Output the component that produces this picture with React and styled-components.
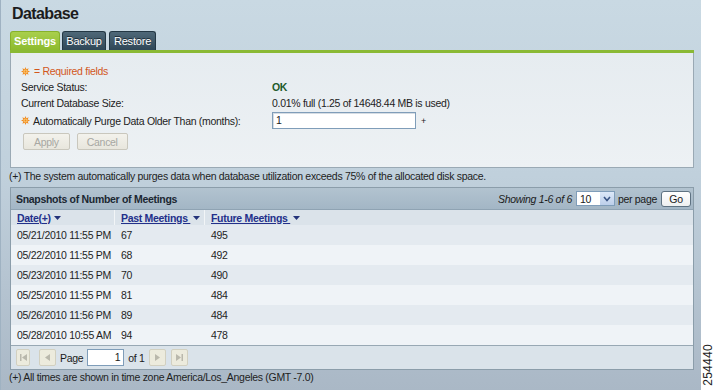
import React from "react";
import styled, { createGlobalStyle } from "styled-components";

const Global = createGlobalStyle`
  html, body { margin: 0; padding: 0; }
  body { font-family: "Liberation Sans", Arial, sans-serif; font-size: 10.5px; letter-spacing: -0.3px; color: #1a1a1a; }
  #root { width: 714px; height: 390px; overflow: hidden; }
`;

const Shell = styled.div`
  display: flex;
  width: 714px;
  height: 390px;
`;

const Main = styled.div`
  flex: 1;
  display: flex;
  flex-direction: column;
  padding: 0 7px 0 9px;
  background: linear-gradient(180deg, #c9d9e3 0%, #c0d0dc 45%, #aab8c6 100%);
  border-left: 1px solid #9fb2c2;
`;

const Strip = styled.div`
  width: 13px;
  background: #ffffff;
  display: flex;
  align-items: flex-end;
  justify-content: center;
  padding-bottom: 4px;
  box-sizing: border-box;
`;

const StripText = styled.span`
  writing-mode: vertical-rl;
  transform: rotate(180deg);
  font-size: 12px;
  color: #222;
  letter-spacing: 0.3px;
`;

const Title = styled.h1`
  margin: 0;
  padding: 4px 0 0 2px;
  height: 27px;
  font-size: 16px;
  letter-spacing: -0.6px;
  line-height: 20px;
  font-weight: bold;
  color: #1c1c1c;
`;

const Tabs = styled.div`
  display: flex;
  gap: 2px;
  height: 19px;
  align-items: flex-end;
`;

const Tab = styled.div`
  height: 19px;
  box-sizing: border-box;
  width: ${p => p.$w}px;
  justify-content: center;
  margin-right: ${p => (p.$active ? 0 : 1)}px;
  border-radius: 3px 3px 0 0;
  display: flex;
  align-items: center;
  font-size: 11px;
  letter-spacing: -0.2px;
  font-weight: ${p => (p.$active ? "bold" : "normal")};
  color: #fff;
  background: ${p =>
    p.$active
      ? "linear-gradient(180deg, #a9cf4c 0%, #8dbb2f 100%)"
      : "linear-gradient(180deg, #4f6878 0%, #2f4757 100%)"};
  border: 1px solid ${p => (p.$active ? "#86b12a" : "#233744")};
  border-bottom: none;
  text-shadow: ${p => (p.$active ? "none" : "0 -1px 0 #1a2a34")};
`;

const GreenBar = styled.div`
  height: 3px;
  background: #8ab934;
`;

const Panel = styled.div`
  background: linear-gradient(180deg, #e6ecf0 0%, #edf1f4 100%);
  border: 1px solid #9aa9b4;
  border-top: none;
  padding: 10px 10px 17px 10px;
  height: 115px;
  box-sizing: border-box;
  display: flex;
  flex-direction: column;
`;

const FormRow = styled.div`
  display: flex;
  align-items: center;
  height: ${p => p.$h || 16}px;
`;

const Label = styled.div`
  width: 251px;
  display: flex;
  align-items: center;
  gap: 3px;
  color: #222;
`;

const Required = styled.div`
  display: flex;
  align-items: center;
  gap: 4px;
  color: #d2571c;
  height: 16px;
`;

const Value = styled.div`
  color: ${p => (p.$ok ? "#1d5a2a" : "#222")};
  font-weight: ${p => (p.$ok ? "bold" : "normal")};
`;

const TextInput = styled.div`
  width: 144px;
  height: 17px;
  box-sizing: border-box;
  border: 1px solid #7f9db9;
  background: #fff;
  padding: 1px 3px;
  line-height: 13px;
  box-shadow: inset 1px 1px 0 #d6dde4;
`;

const Plus = styled.span`
  margin-left: 5px;
  font-size: 9px;
`;

const Buttons = styled.div`
  display: flex;
  gap: 7px;
  margin-top: 3px;
  padding-left: 2px;
`;

const Btn = styled.div`
  height: 17px;
  box-sizing: border-box;
  padding: 0 ${p => p.$px || 8}px;
  border: 1px solid #c9c7bd;
  border-radius: 2px;
  background: linear-gradient(180deg, #f3f2ec 0%, #e8e6dd 100%);
  color: #a7a7a2;
  display: flex;
  align-items: center;
`;

const Note = styled.div`
  height: 14px;
  line-height: 14px;
  margin: 1px 0 4px -1px;
  color: #1e1e1e;
  white-space: nowrap;
`;

const Table = styled.div`
  border: 1px solid #8b9daa;
  display: flex;
  flex-direction: column;
`;

const HeadBar = styled.div`
  height: 21px;
  display: flex;
  align-items: center;
  justify-content: space-between;
  padding: 0 2px 0 5px;
  background: linear-gradient(180deg, #b2c3d0 0%, #a3b6c5 100%);
  border-bottom: 1px solid #8fa3b3;
`;

const HeadTitle = styled.div`
  font-weight: bold;
  color: #1b2732;
`;

const HeadRight = styled.div`
  display: flex;
  align-items: center;
  gap: 3px;
`;

const Italic = styled.span`
  font-style: italic;
  margin-right: 1px;
`;

const Select = styled.div`
  width: 39px;
  height: 15px;
  box-sizing: border-box;
  border: 1px solid #7f9db9;
  background: #fff;
  display: flex;
  align-items: center;
  justify-content: space-between;
  padding-left: 3px;
`;

const SelBtn = styled.div`
  width: 14px;
  height: 13px;
  background: linear-gradient(180deg, #dce8f8 0%, #bccfea 100%);
  display: flex;
  align-items: center;
  justify-content: center;
`;

const GoBtn = styled.div`
  width: 30px;
  height: 16px;
  box-sizing: border-box;
  border: 1px solid #5e7282;
  border-radius: 3px;
  background: linear-gradient(180deg, #ffffff 0%, #eef0f1 100%);
  display: flex;
  align-items: center;
  justify-content: center;
  margin-left: 1px;
`;

const Grid = styled.div`
  display: grid;
  grid-template-columns: 104px 90px 1fr;
`;

const HCell = styled.div`
  height: 15px;
  display: flex;
  align-items: center;
  padding-left: 6px;
  background: #dbe3ea;
  border-right: ${p => (p.$last ? "none" : "1px solid #f2f5f7")};
  gap: 3px;
  white-space: pre;
`;

const SortLink = styled.span`
  color: #23308a;
  font-weight: bold;
  text-decoration: underline;
`;

const Cell = styled.div`
  height: 20px;
  display: flex;
  align-items: center;
  padding-left: 6px;
  white-space: nowrap;
  background: ${p => (p.$odd ? "#e4eaf0" : "#eff3f7")};
  color: #1e1e1e;
`;

const Footer = styled.div`
  height: 23px;
  border-top: 1px solid #98a8b4;
  background: #dae3ea;
  display: flex;
  align-items: center;
  padding-left: 5px;
  gap: 4px;
`;

const PageBtn = styled.div`
  width: ${p => p.$w || 17}px;
  height: 17px;
  box-sizing: border-box;
  border: 1px solid #d2d0c0;
  border-radius: 2px;
  background: #ecebdd;
  display: flex;
  align-items: center;
  justify-content: center;
  margin-right: ${p => p.$mr || 0}px;
`;

const PageInput = styled.div`
  width: 37px;
  height: 17px;
  box-sizing: border-box;
  border: 1px solid #7f9db9;
  background: #fff;
  text-align: right;
  padding-right: 3px;
  line-height: 15px;
`;

const Bottom = styled.div`
  margin: 0 0 0 -1px;
  height: 14px;
  line-height: 14px;
  color: #1e1e1e;
`;

const Star = () => (
  <svg width="9" height="9" viewBox="0 0 10 10">
    <polygon
      points="5,0 6,2.6 8.5,1.5 7.4,4 10,5 7.4,6 8.5,8.5 6,7.4 5,10 4,7.4 1.5,8.5 2.6,6 0,5 2.6,4 1.5,1.5 4,2.6"
      fill="#ef8b22"
    />
    <circle cx="5" cy="5" r="2.2" fill="#fbc46a" />
    <circle cx="5" cy="5" r="1" fill="#ef8b22" />
  </svg>
);

const Caret = () => (
  <svg width="7" height="4" viewBox="0 0 7 4">
    <polygon points="0,0 7,0 3.5,4" fill="#24337a" />
  </svg>
);

const Chevron = () => (
  <svg width="8" height="6" viewBox="0 0 8 6">
    <polyline points="1,1 4,4.5 7,1" fill="none" stroke="#3a5585" strokeWidth="1.6" />
  </svg>
);

const PIcon = ({ kind }) => {
  const c = "#b9b8ac";
  return (
    <svg width="9" height="9" viewBox="0 0 9 9">
      {kind === "first" && (
        <>
          <rect x="1" y="1" width="1.5" height="7" fill={c} />
          <polygon points="8,1 3,4.5 8,8" fill={c} />
        </>
      )}
      {kind === "prev" && <polygon points="7,1 2,4.5 7,8" fill={c} />}
      {kind === "next" && <polygon points="2,1 7,4.5 2,8" fill={c} />}
      {kind === "last" && (
        <>
          <polygon points="1,1 6,4.5 1,8" fill={c} />
          <rect x="6.5" y="1" width="1.5" height="7" fill={c} />
        </>
      )}
    </svg>
  );
};

const rows = [
  ["05/21/2010 11:55 PM", "67", "495"],
  ["05/22/2010 11:55 PM", "68", "492"],
  ["05/23/2010 11:55 PM", "70", "490"],
  ["05/25/2010 11:55 PM", "81", "484"],
  ["05/26/2010 11:56 PM", "89", "484"],
  ["05/28/2010 10:55 AM", "94", "478"],
];

export default function App() {
  return (
    <>
      <Global />
      <Shell>
        <Main>
          <Title>Database</Title>
          <Tabs>
            <Tab $active $w={50}>Settings</Tab>
            <Tab $w={44}>Backup</Tab>
            <Tab $w={47}>Restore</Tab>
          </Tabs>
          <GreenBar />
          <Panel>
            <Required>
              <Star />
              <span>= Required fields</span>
            </Required>
            <FormRow>
              <Label>Service Status:</Label>
              <Value $ok>OK</Value>
            </FormRow>
            <FormRow>
              <Label>Current Database Size:</Label>
              <Value>0.01% full (1.25 of 14648.44 MB is used)</Value>
            </FormRow>
            <FormRow $h={19}>
              <Label>
                <Star />
                <span>Automatically Purge Data Older Than (months):</span>
              </Label>
              <TextInput>1</TextInput>
              <Plus>+</Plus>
            </FormRow>
            <Buttons>
              <Btn $px={10}>Apply</Btn>
              <Btn $px={9}>Cancel</Btn>
            </Buttons>
          </Panel>
          <Note>
            (+) The system automatically purges data when database utilization exceeds 75% of the allocated disk space.
          </Note>
          <Table>
            <HeadBar>
              <HeadTitle>Snapshots of Number of Meetings</HeadTitle>
              <HeadRight>
                <Italic>Showing 1-6 of 6</Italic>
                <Select>
                  <span>10</span>
                  <SelBtn>
                    <Chevron />
                  </SelBtn>
                </Select>
                <span>per page</span>
                <GoBtn>Go</GoBtn>
              </HeadRight>
            </HeadBar>
            <Grid>
              <HCell>
                <SortLink>Date(+)</SortLink>
                <Caret />
              </HCell>
              <HCell>
                <SortLink>Past Meetings </SortLink>
                <Caret />
              </HCell>
              <HCell $last>
                <SortLink>Future Meetings </SortLink>
                <Caret />
              </HCell>
              {rows.map((r, i) =>
                r.map((v, j) => (
                  <Cell key={`${i}-${j}`} $odd={i % 2 === 0}>
                    {v}
                  </Cell>
                ))
              )}
            </Grid>
            <Footer>
              <PageBtn $w={14} $mr={5}>
                <PIcon kind="first" />
              </PageBtn>
              <PageBtn>
                <PIcon kind="prev" />
              </PageBtn>
              <span>Page</span>
              <PageInput>1</PageInput>
              <span>of 1</span>
              <PageBtn $mr={1}>
                <PIcon kind="next" />
              </PageBtn>
              <PageBtn>
                <PIcon kind="last" />
              </PageBtn>
            </Footer>
          </Table>
          <Bottom>(+) All times are shown in time zone America/Los_Angeles (GMT -7.0)</Bottom>
        </Main>
        <Strip>
          <StripText>254440</StripText>
        </Strip>
      </Shell>
    </>
  );
}
